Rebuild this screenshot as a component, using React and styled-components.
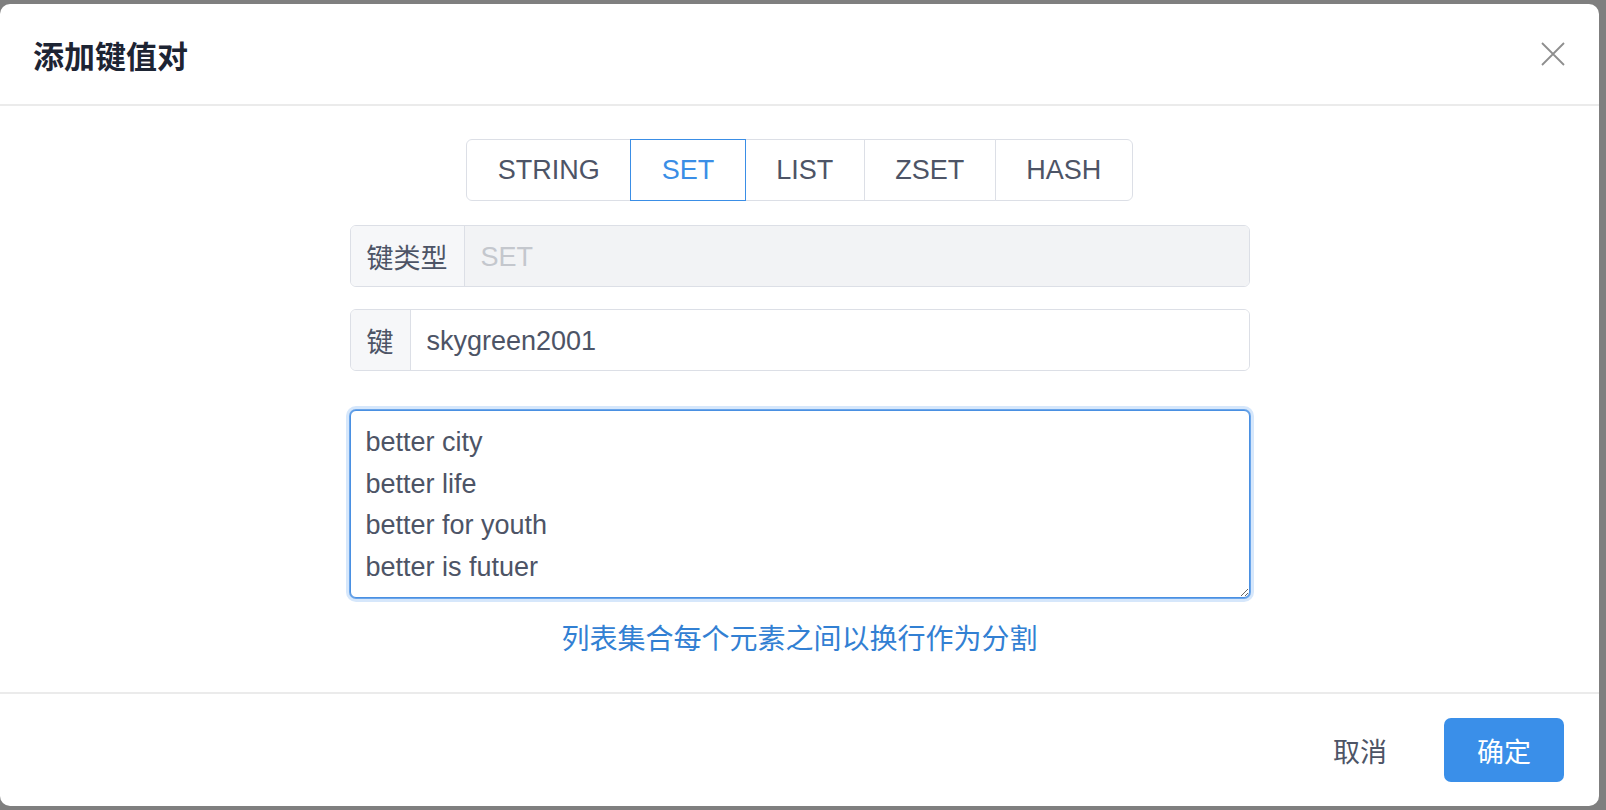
import styled, { createGlobalStyle } from "styled-components"
import { useState } from "react"

const GlobalStyle = createGlobalStyle`
html, body {
  margin: 0;
  padding: 0;
  background: #7f7f7f;
}
body {
  font-family: "Liberation Sans", "Noto Sans CJK SC", sans-serif;
  overflow: hidden;
}
`

const Page = styled.div`
width: 1606px;
height: 810px;
padding-top: 4px;
box-sizing: border-box;
`

const Dialog = styled.div`
width: 1599px;
height: 802px;
background: #fff;
border-radius: 10px;
display: flex;
flex-direction: column;
overflow: hidden;
`

const Header = styled.div`
height: 100px;
flex-shrink: 0;
display: flex;
align-items: center;
justify-content: space-between;
padding: 0 33px 0 33px;
border-bottom: 2px solid #ebebeb;
`

const Title = styled.h2`
margin: 0;
font-family: "Noto Sans CJK SC", sans-serif;
font-size: 31px;
font-weight: 600;
color: #1d2433;
`

const Close = styled.button`
border: none;
background: none;
padding: 0;
width: 26px;
height: 26px;
display: flex;
align-items: center;
justify-content: center;
cursor: pointer;
`

const Body = styled.div`
flex: 1;
display: flex;
flex-direction: column;
align-items: center;
padding-top: 33px;
border-bottom: 2px solid #ebebeb;
`

const TypeGroup = styled.div`
display: flex;
margin-bottom: 24px;
`

const TypeButton = styled.button`
height: 62px;
padding: 0 30.5px;
font-family: "Liberation Sans", sans-serif;
font-size: 27px;
color: ${p => (p.$active ? "#3a8ee6" : "#4d5466")};
background: #fff;
border: 1px solid ${p => (p.$active ? "#3a8ee6" : "#dcdfe6")};
margin-left: -1px;
position: relative;
z-index: ${p => (p.$active ? 1 : 0)};
cursor: pointer;

&:first-child {
  margin-left: 0;
  border-radius: 6px 0 0 6px;
}
&:last-child {
  border-radius: 0 6px 6px 0;
}
`

const Field = styled.div`
width: 900px;
height: 62px;
display: flex;
border: 1px solid #dcdfe6;
border-radius: 6px;
box-sizing: border-box;
overflow: hidden;
margin-bottom: 22px;
`

const Prepend = styled.div`
display: flex;
align-items: center;
padding: 0 16px;
background: #f6f7f9;
border-right: 1px solid #dcdfe6;
font-family: "Noto Sans CJK SC", sans-serif;
font-size: 27px;
color: #4d5466;
`

const Input = styled.input`
flex: 1;
border: none;
outline: none;
padding: 2px 16px 0;
font-family: "Liberation Sans", sans-serif;
font-size: 27px;
color: #4d5466;
background: ${p => (p.disabled ? "#f2f3f5" : "#fff")};

&::placeholder {
  color: #c4c7cd;
}
&:disabled {
  color: #c4c7cd;
}
`

const TextArea = styled.textarea`
width: 900px;
height: 188px;
margin-top: 17px;
box-sizing: border-box;
padding: 11px 15px 3px;
font-family: "Liberation Sans", sans-serif;
font-size: 27px;
line-height: 41.5px;
color: #4d5466;
border: 1px solid #4a90e2;
border-radius: 6px;
box-shadow: 0 0 0 1px #6aa5ea, 0 0 0 4px #d6e7fb;
outline: none;
resize: vertical;
`

const Hint = styled.div`
margin-top: 19px;
font-family: "Noto Sans CJK SC", sans-serif;
font-size: 28px;
line-height: 40px;
color: #3280d3;
`

const Footer = styled.div`
height: 112px;
flex-shrink: 0;
display: flex;
align-items: center;
justify-content: flex-end;
gap: 26px;
padding-right: 35px;
`

const Button = styled.button`
height: 64px;
padding: 0 ${p => (p.$primary ? "33px" : "31px")};
border: none;
border-radius: 7px;
font-family: "Noto Sans CJK SC", sans-serif;
font-size: 27px;
color: ${p => (p.$primary ? "#fff" : "#4d5466")};
background: ${p => (p.$primary ? "#3a8fe9" : "transparent")};
cursor: pointer;
`

const types = ["STRING", "SET", "LIST", "ZSET", "HASH"]

export default function App() {
  const [type, setType] = useState("SET")
  const [key, setKey] = useState("skygreen2001")
  const [value, setValue] = useState("better city\nbetter life\nbetter for youth\nbetter is futuer")

  return (
    <Page>
      <GlobalStyle />
      <Dialog>
        <Header>
          <Title>添加键值对</Title>
          <Close>
            <svg width="24" height="24" viewBox="0 0 24 24">
              <path d="M1 1 L23 23 M23 1 L1 23" stroke="#8e8e8e" strokeWidth="1.8" fill="none" />
            </svg>
          </Close>
        </Header>
        <Body>
          <TypeGroup>
            {types.map(t => (
              <TypeButton key={t} $active={t === type} onClick={() => setType(t)}>
                {t}
              </TypeButton>
            ))}
          </TypeGroup>
          <Field>
            <Prepend>键类型</Prepend>
            <Input disabled placeholder={type} />
          </Field>
          <Field>
            <Prepend>键</Prepend>
            <Input value={key} onChange={e => setKey(e.target.value)} />
          </Field>
          <TextArea value={value} onChange={e => setValue(e.target.value)} />
          <Hint>列表集合每个元素之间以换行作为分割</Hint>
        </Body>
        <Footer>
          <Button>取消</Button>
          <Button $primary>确定</Button>
        </Footer>
      </Dialog>
    </Page>
  )
}
